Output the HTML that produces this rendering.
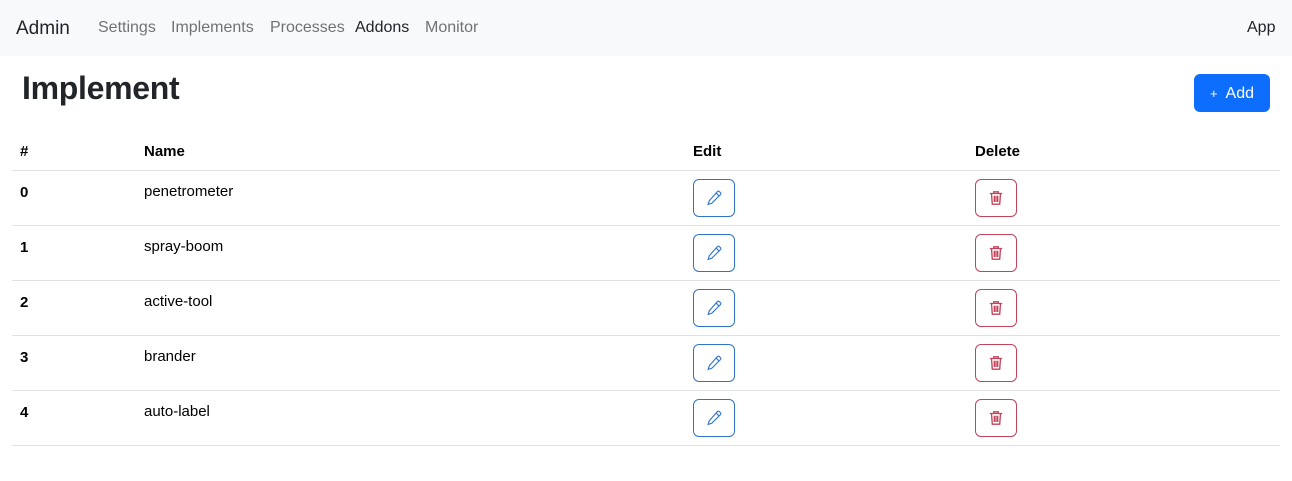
<!DOCTYPE html>
<html><head><style>
body{margin:0;font-family:"Liberation Sans",sans-serif;color:#212529;background:#fff;width:1292px;height:481px;overflow:hidden;position:relative}
.nav{position:absolute;left:0;top:0;width:1292px;height:56px;background:#f8f9fa}
.nav span{position:absolute;top:19px;font-size:16px;color:rgba(0,0,0,.55)}
h1{position:absolute;left:22px;top:70px;margin:0;font-size:32px;font-weight:bold;letter-spacing:-0.3px}
.add{position:absolute;left:1194px;top:74px;width:76px;height:38px;background:#0d6efd;border-radius:6px;color:#fff;font-size:16px;line-height:39px;text-align:center}
.th{position:absolute;top:143px;font-size:15px;font-weight:bold;color:#000}
.line{position:absolute;left:12px;width:1268px;height:1px;background:#dee2e6}
.c{position:absolute;font-size:15px;color:#000}
.b{position:absolute;width:40px;height:36px;border:1px solid;border-radius:6px}
.b svg{position:absolute;left:11px;top:9px}
</style></head><body>
<div class="nav">
<span style="left:16px;top:18px;font-size:19px;color:#212529">Admin</span>
<span style="left:98px">Settings</span>
<span style="left:171px">Implements</span>
<span style="left:270px">Processes</span>
<span style="left:355px;color:#212529">Addons</span>
<span style="left:425px">Monitor</span>
<span style="left:1247px;color:#212529">App</span>
</div>
<h1>Implement</h1>
<div class="add"><span style="font-size:13px">+</span>&nbsp; Add</div>
<div class="th" style="left:20px">#</div>
<div class="th" style="left:144px">Name</div>
<div class="th" style="left:693px">Edit</div>
<div class="th" style="left:975px">Delete</div>
<div class="line" style="top:170px"></div>
<div id="rows"></div>
<script>
var n=["penetrometer","spray-boom","active-tool","brander","auto-label"],h="";
n.forEach(function(s,i){var y=170+i*55;
h+='<div class="c" style="left:20px;top:'+(y+14)+'px;font-weight:bold">'+i+'</div>';
h+='<div class="c" style="left:144px;top:'+(y+13)+'px">'+s+'</div>';
h+='<div class="b" style="left:693px;top:'+(y+9)+'px;border-color:#2f74c8"><svg width="18" height="18" viewBox="0 0 16 16" fill="none" stroke="#2f74c8" stroke-width="1"><path d="M11 2.3a1.2 1.2 0 0 1 1.8 0l.9.9a1.2 1.2 0 0 1 0 1.8L6 12.7l-3.2 1 1-3.2z M9.8 3.5l2.7 2.7"/></svg></div>';
h+='<div class="b" style="left:975px;top:'+(y+9)+'px;border-color:#c2435a"><svg width="18" height="18" viewBox="0 0 16 16" fill="none" stroke="#c2435a" stroke-width="1.2"><path d="M2.5 4h11M6 4V2.5h4V4M4 4l.7 9.5h6.6L12 4M6.5 6v5.5M9.5 6v5.5M8 6v5.5"/></svg></div>';
h+='<div class="line" style="top:'+(y+55)+'px"></div>';});
document.getElementById("rows").innerHTML=h;
</script>
</body></html>
